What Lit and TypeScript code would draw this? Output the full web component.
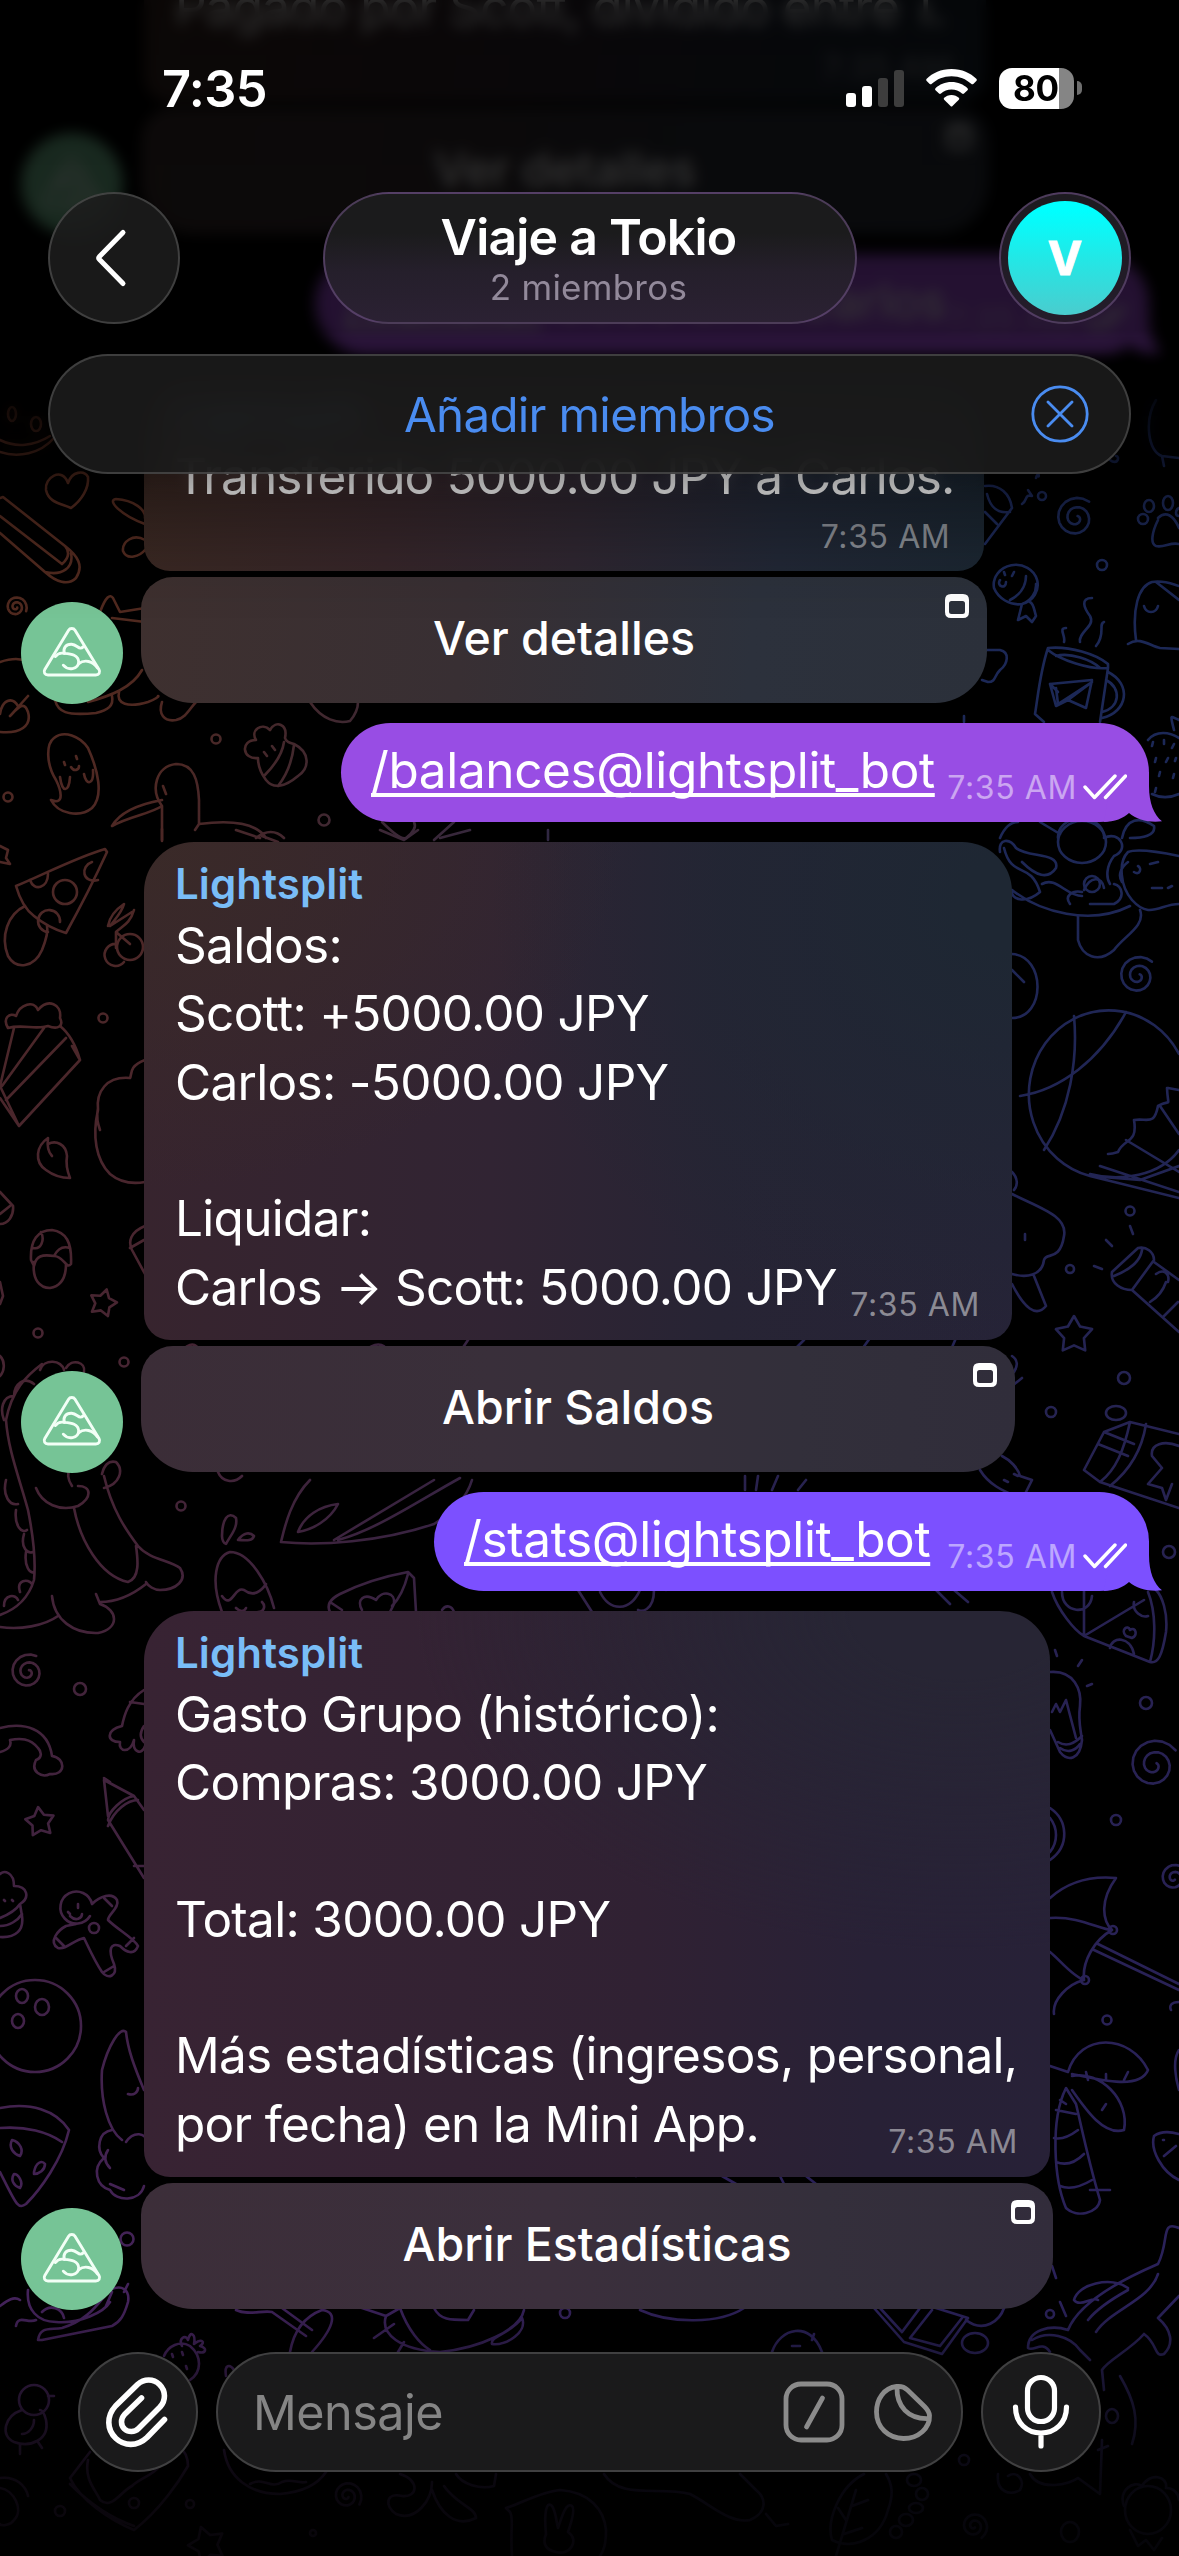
import { LitElement, html, svg, css } from "lit";
import { customElement, property } from "lit/decorators.js";

/* ---------- wallpaper doodles ---------- */

const spiral = (x: number, y: number, r: number, turn = 0) => {
  let d = "";
  for (let i = 0; i <= 40; i++) {
    const t = i / 40;
    const a = turn + t * Math.PI * 4;
    const k = r * (0.12 + 0.88 * t);
    d += `${i ? "L" : "M"}${(x + k * Math.cos(a)).toFixed(1)} ${(y + k * Math.sin(a)).toFixed(1)}`;
  }
  return d;
};

const ring = (x: number, y: number, rx: number, ry = rx) =>
  `M${x - rx} ${y}a${rx} ${ry} 0 1 0 ${2 * rx} 0a${rx} ${ry} 0 1 0 ${-2 * rx} 0`;

const star = (x: number, y: number, r: number, turn = -1.57) => {
  let d = "";
  for (let i = 0; i < 10; i++) {
    const a = turn + (i * Math.PI) / 5;
    const k = i % 2 ? r * 0.55 : r;
    d += `${i ? "L" : "M"}${(x + k * Math.cos(a)).toFixed(1)} ${(y + k * Math.sin(a)).toFixed(1)}`;
  }
  return d + "Z";
};

const DOODLES: string[] = [
  // left edge, top
  "M0 452C18 458 40 454 54 438M0 440C16 448 34 446 50 436",
  ring(12, 414, 4, 7), ring(36, 424, 5, 7),
  "M68 483C62 466 44 478 46 490C49 503 60 503 71 508C82 500 89 488 88 477C84 470 72 471 68 483Z",
  "M0 498L3 497L65 546C78 556 84 566 76 578C68 586 56 582 45 572L0 533M0 516L62 564M62 564C69 558 70 552 65 546M45 572C62 576 74 568 71 553",
  "M145 524C122 516 106 500 116 499C134 500 146 510 145 518M145 540C133 533 122 542 123 551C127 561 140 556 145 550",
  spiral(16, 607, 11, 0.4),
  "M100 612C106 596 110 594 113 598L120 612L145 608M112 618L145 622",
  "M0 662C18 656 30 660 36 670M0 732C20 734 32 726 28 712C24 700 18 708 10 716M10 716L28 696M0 714C2 700 12 696 18 706",
  "M55 700C58 712 66 716 96 713C108 710 114 706 112 696M88 702C110 696 132 688 142 670M119 692C116 704 128 708 148 702C154 700 160 696 158 696M162 702C158 714 164 722 176 720C186 718 190 708 196 702",
  "M310 702C322 720 338 724 350 721C356 714 358 708 358 702",
  "M51 800C66 806 60 788 56 780C46 764 46 744 54 738C64 730 80 736 88 748C98 770 104 796 92 808C80 818 58 814 51 800Z",
  "M64 762l1 3M76 756l1 3M71 767c3 5 8 3 8-1M60 777c2 16 9 16 10 0M84 774c2 12 10 11 9-4",
  ring(216, 739, 4.5), ring(8, 797, 4.5), ring(324, 820, 5.5),
  "M258 758C242 760 240 740 256 740C250 730 262 722 270 730C276 720 288 724 285 738C286 742 290 743 294 744C310 752 310 768 298 776C286 786 274 790 266 780C260 772 258 764 258 758ZM284 742C282 756 272 768 264 776M294 745C292 762 286 776 278 786M264 752l3 4M272 746l3 4",
  "M162 840L162 806C150 790 156 766 176 764C194 764 198 780 199 800L199 824C230 820 256 822 266 838M162 800C140 804 120 812 112 826C130 816 150 814 162 806M163 786l3 8M199 824l-4 6M236 830l24 8M262 836l16 6",
  "M382 822C392 832 402 840 406 838C414 832 416 826 414 822M434 840l20-18",
  // left edge, upper middle
  "M105 849C80 856 40 876 16 886C20 900 26 910 34 916C46 926 56 930 66 933C82 904 96 876 107 852Z",
  ring(65, 892, 12), "M30 880c4 12 18 8 18-6M98 880C82 884 80 866 92 862M48 932A11 11 0 1 1 60 922",
  "M25 906C8 914 0 936 8 956C16 970 34 968 42 950C46 940 48 930 47 926",
  "M0 846l8 4-2 8 4 6-10-2",
  ring(130, 947, 13), "M117 944A11 11 0 1 0 124 962M116 932L116 948M116 932C122 926 130 924 134 910M108 926C110 914 118 908 124 904C122 912 116 918 110 926M116 932L130 944M110 926l22-14",
  "M162 841l0-12M256 838c10-8 20-8 28 0M380 830l24 10 14-10M440 838l30-8M548 830v10",
  "M8 1028C2 1018 10 1012 16 1016C20 1004 34 1000 38 1010C48 998 62 1004 60 1018C64 1026 58 1030 48 1026C36 1030 22 1024 8 1028ZM14 1028L0 1086L19 1126L80 1060C76 1046 70 1034 60 1026M44 1028L2 1086M66 1038L6 1100M80 1060L72 1046M19 1126L0 1098",
  ring(103, 1018, 4.5),
  "M48 1138C36 1146 34 1162 46 1170C54 1176 62 1178 70 1178C66 1168 66 1162 67 1156C66 1144 56 1140 48 1144M48 1138c-1 8 0 14 4 18",
  "M145 1060C128 1066 132 1076 130 1078C106 1076 96 1092 98 1110C92 1136 96 1160 110 1174C122 1184 134 1184 145 1182M98 1108c-2 10 0 16 2 22",
  "M0 1192L13 1206C14 1216 8 1224 0 1224M0 1214l10-8",
  "M31 1260C30 1240 38 1230 52 1230C66 1232 72 1242 71 1264C66 1270 64 1256 54 1256C42 1254 36 1256 34 1266ZM34 1262C32 1280 40 1288 50 1288C62 1286 66 1276 66 1264M33 1248c8 2 12-8 8-16M54 1256c4-8 10-10 16-8",
  "M145 1226C130 1232 128 1242 132 1250L145 1274M130 1248l14-8",
  star(103, 1303, 14, -1.3), ring(38, 1333, 4.5), ring(124, 1362, 4.5), "M0 1282l3 14-3 8M0 1356c6 6 4 16 0 20",
  // dinosaur
  "M42 1364C26 1376 12 1390 6 1420C8 1450 20 1480 28 1510C34 1540 36 1560 34 1580C28 1600 14 1610 0 1615M34 1384C24 1376 14 1384 14 1396M14 1396C2 1396 0 1410 4 1420M6 1480C2 1496 10 1506 18 1504M16 1510C14 1526 22 1534 27 1530M24 1534C20 1548 28 1554 33 1552M26 1552C24 1566 30 1574 34 1572M20 1592C16 1580 28 1578 32 1584M4 1606C4 1594 16 1594 18 1600",
  "M36 1488C42 1504 60 1512 78 1506C92 1498 92 1486 78 1486M72 1486C68 1480 66 1474 72 1464M74 1508C80 1540 100 1576 128 1582C140 1578 138 1560 136 1546M104 1476C112 1510 126 1530 138 1546C150 1560 170 1560 180 1568C188 1580 176 1590 160 1590C154 1590 148 1586 146 1582M104 1488C120 1484 124 1470 116 1462C108 1460 104 1466 102 1474M52 1596C54 1620 74 1634 98 1633C120 1628 118 1610 100 1604L96 1594M100 1602C120 1602 136 1592 146 1584M0 1627C20 1630 44 1626 58 1616",
  "M40 1370c4-12 22-10 24 0M66 1368c6-10 20-6 18 4",
  ring(181, 1506, 4.5),
  "M218 1472c4 10 16 12 24 4M310 1480C290 1500 284 1530 281 1542C320 1546 380 1542 434 1524M434 1480L334 1540M298 1532C304 1516 320 1506 338 1504C330 1520 312 1530 298 1532ZM434 1524C450 1514 466 1500 472 1480M338 1540C376 1530 420 1500 460 1478",
  "M222 1536C222 1520 228 1510 236 1518C238 1528 230 1536 226 1544C224 1544 222 1540 222 1536ZM238 1540c6-8 12-8 16-4c-2 6-10 4-16 4Z",
  "M222 1612C210 1580 216 1556 230 1552C250 1552 268 1584 274 1608M222 1596C232 1610 234 1586 244 1590C254 1598 262 1590 266 1584M236 1608c4 4 8 4 10 0M258 1612c6 0 8-6 4-10",
  "M330 1612C326 1604 332 1598 340 1594C360 1584 386 1576 408 1572L414 1578L416 1612M330 1602L342 1610M362 1610C356 1600 364 1592 376 1600C382 1590 396 1592 394 1604L390 1612M408 1574C404 1590 398 1600 392 1606M442 1610c4-6 10-4 12 2",
  "M578 1590l14 22M600 1592c10 20 30 20 40-2M666 1590v-4M654 1590c0 22-14 22-16 20",
  // left edge, lower middle
  spiral(28, 1672, 18, -1.1), ring(80, 1689, 6),
  "M144 1690C128 1700 124 1716 122 1726C106 1730 106 1742 120 1742C118 1752 130 1754 134 1740C132 1752 142 1756 145 1746M130 1702l14 2M144 1726c-4 6-4 12 0 16",
  "M0 1728C24 1722 48 1728 52 1756C66 1758 66 1776 50 1774C42 1778 30 1772 36 1760C42 1758 42 1752 38 1748C30 1738 20 1738 10 1740C12 1746 8 1750 0 1752",
  star(40, 1822, 15, -1.7),
  "M144 1878L108 1820C108 1812 122 1798 134 1796L144 1810M108 1816L104 1780L134 1796M104 1778l6 4M108 1826c6-16 20-26 30-26M134 1866h10",
  "M0 1874C4 1870 14 1872 14 1886C28 1886 30 1898 20 1904L22 1916C24 1930 16 1938 0 1937M0 1918C10 1914 16 1910 20 1904M0 1926c10 0 18-6 22-12M4 1900l1 1M12 1900l1 1",
  "M90 1916A16 16 0 1 1 92 1904M92 1904C100 1896 112 1892 117 1900C120 1908 108 1914 108 1920C118 1930 134 1938 138 1946C134 1956 126 1952 120 1946C110 1942 108 1950 114 1964C118 1976 108 1980 102 1972C94 1960 88 1946 84 1938C74 1940 66 1950 58 1948C48 1942 58 1930 66 1926L76 1924M56 1938l8 8M104 1898l8 8M126 1946l8-8M104 1972l10-6M68 1912l2 2M78 1904v4M70 1916c6 6 12 2 12-2",
  ring(94, 1928, 5),
  ring(35, 2026, 46), ring(22, 1996, 6, 7), ring(42, 2007, 7, 8), ring(18, 2021, 6, 7),
  "M144 2090C134 2066 128 2050 126 2032C120 2026 108 2046 102 2070C100 2100 108 2130 122 2140M128 2094c6 2 10-2 10-6",
  // lower left corner
  "M0 2108C30 2102 56 2110 69 2130C62 2160 40 2190 26 2204C18 2210 16 2204 0 2172M0 2128C26 2126 48 2132 62 2142M12 2140c-4 8 2 14 8 16c4-6 0-14-8-16ZM34 2172c2-10 8-12 11-8c0 6-6 10-11 10ZM14 2174c-4 6 0 12 6 14c4-6-2-14-6-14Z",
  "M126 2142C134 2130 146 2134 146 2140M112 2130C98 2132 96 2150 104 2158C92 2168 96 2186 110 2190C116 2202 140 2202 144 2186M108 2150c-4 6-4 12 2 18M110 2184l14 6",
  ring(127, 2239, 6.5),
  "M28 2290C26 2310 38 2322 56 2322C80 2324 104 2312 110 2302M38 2340C40 2326 50 2330 62 2328C90 2320 100 2300 110 2290C122 2284 130 2290 128 2302C124 2316 120 2322 112 2326L42 2340ZM0 2306C8 2300 14 2296 20 2300M16 2326C18 2314 28 2324 36 2320M106 2306l6-14M124 2292l4-8M42 2312c8-8 20-4 22 6",
  "M164 2356C168 2346 180 2340 190 2346C202 2356 202 2372 190 2380M182 2346c-4-8 4-12 6-6c2-10 8-6 6 4c8-6 12-2 6 2c8 2 6 8-2 6M172 2354l1 3M182 2352l1 3M186 2366l1 3",
  "M236 2310C248 2316 262 2310 272 2312L306 2336M282 2308L312 2330M290 2352C294 2330 306 2316 322 2310C340 2312 332 2330 312 2352",
  "M362 2308L386 2316L400 2308M386 2316C380 2334 400 2350 440 2352C480 2348 520 2330 524 2310M400 2308C408 2330 420 2344 430 2350M434 2308C440 2320 450 2320 468 2320L474 2310M492 2344C490 2336 510 2334 522 2318C528 2332 506 2346 492 2344ZM374 2338l20-14M398 2352l6-10",
  ring(565, 2313, 5), "M226 2376c-2-12 4-12 8-6",
  // bottom strip
  ring(34, 2400, 15), "M22 2410C4 2416 0 2436 14 2442C30 2448 50 2440 46 2420C44 2412 42 2410 40 2410M20 2444v10M38 2442l4 6M34 2420c0 8-6 14-12 14M48 2396h6",
  "M0 2478C16 2476 26 2486 28 2496M0 2488C14 2490 24 2510 14 2520C10 2526 0 2526 0 2524M90 2452L70 2478C80 2500 110 2520 134 2530C160 2510 180 2480 188 2466C188 2456 184 2450 178 2446M88 2460C84 2480 96 2490 100 2500C112 2510 120 2492 132 2486C140 2478 152 2476 160 2466M70 2484c20 20 40 34 64 42",
  ring(60, 2511, 5), ring(134, 2503, 5), ring(190, 2504, 4), star(207, 2545, 19, -1.9), ring(313, 2533, 3),
  "M224 2450C228 2478 250 2494 280 2494C304 2492 318 2484 326 2472M250 2484c14-8 20 6 32-2c10-4 16 2 24 0",
  spiral(347, 2496, 15, 0.6),
  "M400 2474C420 2480 418 2498 402 2496C386 2492 384 2506 396 2514C416 2522 432 2500 432 2482M432 2490C440 2514 456 2528 476 2518C476 2508 456 2504 444 2486M456 2474C462 2484 480 2490 494 2486L496 2474",
  "M512 2556C510 2530 514 2518 510 2512L506 2508C520 2504 540 2492 560 2490C590 2492 604 2510 606 2530C606 2544 604 2550 600 2556M546 2534C544 2514 546 2500 552 2506C556 2512 556 2520 558 2528C562 2516 566 2502 572 2506C576 2510 570 2526 568 2532C580 2540 570 2556 556 2552C546 2550 542 2544 546 2534Z",
  "M604 2474C620 2500 660 2486 690 2494C710 2504 730 2524 750 2520C768 2512 766 2498 756 2490L740 2474M766 2514l10 12 12-2",
  "M864 2474C840 2486 826 2520 832 2540C852 2550 880 2540 888 2510C894 2494 892 2484 886 2474M836 2556L856 2490M846 2520l-8-12M852 2506l16-6M844 2534l18-6",
  ring(914, 2480, 7, 6), ring(922, 2494, 6), ring(916, 2508, 7, 5), ring(906, 2520, 7, 6), ring(896, 2532, 6),
  spiral(974, 2526, 14, 1), ring(1070, 2532, 9, 10), ring(964, 2460, 5),
  ring(1148, 2510, 23, 24), "M1124 2506C1118 2490 1134 2480 1142 2486C1150 2472 1168 2476 1166 2488C1174 2488 1179 2494 1179 2500M1130 2530l8 16 8-6 8 10 8-12",
  "M998 2474C996 2492 1010 2496 1020 2490C1026 2480 1016 2470 1008 2476M1030 2474C1040 2492 1070 2484 1078 2478L1100 2494L1102 2440",
  // right edge, top
  "M1156 400C1144 420 1148 452 1162 456L1179 458M1162 456l2 10M1110 460c8 6 10-4 6-4",
  "M985 486C1000 484 1010 494 1012 508L985 544M987 494C990 506 996 514 1010 512M985 512l12 12",
  "M1036 478C1038 470 1040 478 1038 476M1022 504c6-4 2-10 10-8l-4-6",
  ring(1042, 496, 4), ring(1102, 565, 5), spiral(1076, 518, 21, -0.9),
  "M1158 518C1166 510 1174 516 1179 528M1158 520C1152 532 1150 544 1156 546C1164 548 1170 542 1179 544", ring(1143, 519, 5), ring(1149, 506, 5, 6), ring(1168, 503, 5, 7), "M1179 508c-4 2-4 8 0 8",
  "M1022 604A22 20 0 1 0 994 588C998 598 1010 606 1022 604A22 20 0 0 0 1036 584M1026 576C1026 588 1018 596 1010 600M1022 604L1018 620L1026 616L1032 622L1036 616C1034 610 1034 604 1030 602M1000 580c-4 6 6 10 6 2M1004 572l1 3M1012 576l2-4",
  "M1179 586C1172 584 1164 580 1152 582C1138 586 1132 610 1136 640M1156 582L1179 600M1144 606c2 8 12 8 14 0M1128 644C1140 636 1150 646 1160 648L1179 649",
  "M1092 598C1080 598 1084 608 1090 616C1096 626 1078 632 1080 642M1066 628C1058 628 1066 636 1064 642M1104 622C1098 624 1106 634 1096 646",
  "M1048 648C1040 672 1038 696 1035 714L1044 722M1048 648C1070 646 1096 654 1108 664L1108 668C1090 670 1060 660 1048 650M1108 668L1100 722M1056 656C1070 652 1092 660 1100 668M1108 672C1132 684 1128 712 1102 718M1106 680C1122 688 1120 708 1102 712M1050 684L1092 680L1086 708L1068 700L1056 706ZM1056 688L1058 704L1092 682L1068 700M1050 684l8 8",
  "M987 650H1000C1010 652 1008 664 1000 670C994 676 996 682 988 682M982 680l6 2M964 716v6",
  "M1148 740C1156 730 1170 732 1179 738M1179 720C1170 716 1170 714 1174 730M1153 742l-1 4M1164 740v4M1174 744l-2 4M1156 758l-1 4M1168 758l-2 4M1160 772l-1 4M1174 774l-1 4M1156 788l-1 4M1152 794c8 4 18 4 27 0M1176 758l-1 3",
  // right edge, upper middle
  "M1000 838C1006 824 1014 822 1018 822M1040 822L1060 834M1122 838C1126 818 1140 816 1154 826C1156 836 1142 838 1130 838M1058 838a22 18 0 0 1 46-2",
  ring(1082, 842, 24, 21), "M1000 852C998 838 1010 838 1016 848C1028 858 1060 852 1056 868C1048 880 1036 876 1022 862M1012 890C1010 900 1026 904 1040 892C1030 860 1012 880 1004 848M1104 838C1120 830 1130 850 1114 856C1106 866 1106 878 1110 884M1042 884C1056 876 1066 896 1082 896M1070 904C1064 896 1072 890 1082 892M1012 890C1040 912 1090 926 1130 906M1090 904l24 0c12-6 8-18 0-20",
  ring(1092, 884, 8), "M1084 890c6-14 18-14 20-2",
  "M1132 900C1120 886 1118 862 1128 852C1138 848 1160 852 1179 856M1132 900C1150 920 1160 904 1179 904M1134 872c6 4 8-4 4-6M1150 864l8-2M1152 888l10 0M1168 888l4-2M1128 862c-8 6-10 14-6 20M1140 910C1146 926 1124 936 1114 950C1098 964 1082 956 1078 940L1078 916",
  "M1012 954C1046 956 1046 1018 1012 1018M1012 970l12 12",
  spiral(1138, 976, 20, -0.8),
  "M1179 1054A80 84 0 1 0 1090 1176L1140 1180L1179 1166M1074 1016C1078 1060 1070 1110 1044 1150M1126 1012C1100 1060 1060 1090 1020 1096M1090 1176L1179 1198M1090 1174C1120 1182 1160 1176 1179 1150M1167 1088C1168 1110 1172 1098 1158 1106C1154 1126 1148 1118 1134 1120C1138 1144 1124 1138 1118 1152C1112 1154 1108 1154 1108 1154M1160 1106L1179 1134M1126 1140L1179 1172M1100 1166l79 26M1168 1088l11 2",
  "M1012 1172c6 6 6 14 2 18M1012 1194C1040 1208 1068 1216 1064 1236C1060 1262 1046 1252 1044 1260C1042 1276 1026 1278 1012 1274M1012 1284C1024 1308 1036 1318 1046 1306L1034 1276M1025 1234v6",
  ring(1130, 1211, 4.5), ring(1070, 1269, 4), "M1130 1226l3 8M1106 1240l6 6M1094 1266l8 3",
  "M1138 1248L1112 1272C1110 1284 1122 1290 1132 1290L1154 1260C1154 1252 1146 1246 1138 1248ZM1114 1276C1124 1272 1140 1264 1142 1250M1154 1262L1179 1280M1132 1290L1179 1332M1156 1274c8-6 14 0 12 8M1150 1302c10-6 14-14 16-20M1164 1316l14-14",
  star(1074, 1335, 19), ring(1124, 1378, 6), ring(1051, 1412, 5), "M1012 1356C1018 1360 1018 1366 1014 1372M1012 1386l10-8",
  ring(1116, 1413, 10, 7),
  "M1084 1470L1104 1432L1130 1422L1179 1434M1084 1470L1100 1482L1179 1508M1104 1432L1134 1444M1130 1422C1124 1450 1116 1470 1100 1482M1146 1424C1142 1450 1130 1470 1110 1486M1098 1444l30 12M1179 1446C1164 1440 1150 1444 1152 1456L1162 1468L1148 1484L1162 1488L1166 1500L1172 1484",
  "M980 1470C992 1490 1014 1494 1028 1502M1002 1456C1010 1460 1018 1468 1020 1476L1032 1480L1026 1492M1004 1480l4 2M1014 1474l4 2M745 1490v-14M756 1490l2-14M772 1490l6-14M798 1490l8-10",
  "M364 1352c10-10 20-10 24 0M460 1352l8-12M790 1354l14-14M860 1352l10-14M950 1352l6-14M180 1352c10-10 16-10 20 0",
  // right edge, lower middle
  ring(1169, 1552, 6),
  "M1052 1592C1058 1610 1074 1630 1084 1636L1150 1662C1158 1664 1162 1656 1166 1632C1168 1612 1162 1596 1156 1590M1084 1636L1084 1590M1084 1636L1144 1600M1150 1662C1156 1640 1156 1612 1148 1592M1110 1648c2-12 20-12 24 6M1134 1602c-2 10 8 16 14 14M1126 1636c-6-6 2-12 4-6c6-4 8 6 2 8ZM1062 1592c0 22 28 24 30 4M936 1590l14 14M954 1590l14 12",
  "M1055 1650l2 6M1082 1660l-4 6M1092 1684l-5 2",
  "M1050 1672C1074 1670 1082 1690 1080 1706C1078 1720 1080 1726 1082 1740C1080 1760 1068 1762 1060 1752L1050 1730M1058 1742c10 6 18 0 24-6M1060 1748c8 6 16 2 20-4M1052 1712l4-8 4 8 6-12 10 38",
  ring(1146, 1703, 6), spiral(1154, 1765, 26, -0.6), ring(1116, 1820, 5), "M1050 1808C1068 1820 1070 1846 1050 1860M1050 1818c8 10 8 24 0 34",
  spiral(1174, 1878, 16, 1.1),
  "M1050 1898C1070 1880 1094 1876 1116 1878C1100 1900 1102 1920 1112 1930C1100 1930 1080 1916 1050 1918M1112 1930C1094 1940 1082 1962 1084 1980C1072 1976 1060 1960 1050 1952M1084 1980C1068 1984 1052 2000 1054 2014M1094 1950L1179 1990M1098 1944L1179 1984M1179 2002c-8 0-10 4-8 8",
  ring(1113, 1930, 4), ring(1085, 1980, 4), ring(1107, 2020, 4.5),
  "M1050 2066L1068 2072C1080 2032 1130 2034 1148 2070C1140 2090 1100 2080 1072 2074M1072 2076C1100 2070 1130 2100 1124 2130C1104 2136 1086 2110 1072 2090M1066 2088C1050 2120 1054 2180 1066 2208C1076 2218 1098 2214 1100 2200C1088 2160 1080 2120 1076 2104ZM1056 2110l20 4M1054 2138c8 2 16-2 24-8M1056 2162c10 4 20 0 28-8M1060 2186c10 4 22 0 32-6M1090 2190h20M1086 2072l2 8M1106 2080l0-6M1124 2080l4-8M1102 2110l4-6M1060 2100l6 4",
  "M1179 2050C1172 2060 1176 2080 1179 2090M1179 2180C1162 2172 1150 2150 1154 2136C1162 2130 1172 2132 1179 2134M1164 2156l12-10M1163 2140l1 0",
  // crocodile
  "M1179 2228C1160 2220 1170 2240 1158 2264C1130 2276 1080 2300 1068 2330M1128 2288C1110 2276 1078 2284 1074 2300C1080 2308 1092 2296 1098 2300M1158 2274C1150 2300 1110 2310 1096 2332M1128 2290C1110 2300 1096 2310 1088 2320M1158 2318C1172 2330 1174 2344 1164 2354C1154 2358 1158 2344 1144 2334M1144 2334C1130 2350 1108 2360 1102 2370L1104 2390M1158 2318L1179 2296M1068 2330C1050 2324 1028 2330 1028 2348C1034 2352 1042 2340 1050 2352M1032 2340C1048 2330 1070 2336 1080 2350C1086 2356 1090 2360 1090 2360M1056 2278l-4-12M1066 2316l-6-14",
  ring(1050, 2314, 4), ring(975, 2343, 13, 10),
  "M874 2308L904 2342L942 2354L968 2318L936 2308M880 2308L902 2332L920 2308M932 2310L910 2338L940 2346L962 2318M966 2320C984 2334 1000 2320 1004 2308M640 2310C670 2324 720 2324 744 2308M772 2352C780 2328 810 2320 822 2352M792 2346h8M812 2340l2-6M636 2176c6-6 14-8 20-6M722 2176l14 8M780 2176l4 8M806 2176l10 8",
  "M1120 2376C1134 2400 1140 2420 1132 2444M1108 2446l-10 4", ring(1112, 2416, 6, 7),
];

@customElement("chat-wallpaper")
class ChatWallpaper extends LitElement {
  static styles = css`
    :host { display: block; }
    svg { display: block; width: 1179px; height: 2556px; }
  `;
  render() {
    return html`<svg viewBox="0 0 1179 2556" aria-hidden="true">
      <defs>
        <linearGradient id="left" x1="0" y1="0" x2="0" y2="1">
          <stop offset="0" stop-color="#50291c" /><stop offset=".25" stop-color="#50291f" />
          <stop offset=".5" stop-color="#482530" /><stop offset=".72" stop-color="#41233f" />
          <stop offset=".9" stop-color="#43225a" /><stop offset="1" stop-color="#3a2446" />
        </linearGradient>
        <linearGradient id="right" x1="0" y1="0" x2="0" y2="1">
          <stop offset="0" stop-color="#1a264f" /><stop offset=".3" stop-color="#1c2857" />
          <stop offset=".6" stop-color="#272251" /><stop offset=".9" stop-color="#2a215a" />
          <stop offset="1" stop-color="#24203f" />
        </linearGradient>
        <linearGradient id="across"><stop offset=".12" stop-color="#000" /><stop offset=".7" stop-color="#fff" /></linearGradient>
        <linearGradient id="fade" x1="0" y1="0" x2="0" y2="1">
          <stop offset=".9" stop-color="#000" stop-opacity="0" /><stop offset=".945" stop-color="#000" stop-opacity=".55" />
          <stop offset=".97" stop-color="#000" stop-opacity=".8" /><stop offset="1" stop-color="#000" stop-opacity=".86" />
        </linearGradient>
        <mask id="horizontal"><rect width="1179" height="2556" fill="url(#across)" /></mask>
        <mask id="lines" maskUnits="userSpaceOnUse" x="0" y="0" width="1179" height="2556">
          <g fill="none" stroke="#fff" stroke-width="2.6" stroke-linecap="round" stroke-linejoin="round">
            ${DOODLES.map((d) => svg`<path d=${d} />`)}
          </g>
        </mask>
      </defs>
      <rect width="1179" height="2556" fill="#000" />
      <g mask="url(#lines)">
        <rect width="1179" height="2556" fill="url(#left)" />
        <rect width="1179" height="2556" fill="url(#right)" mask="url(#horizontal)" />
      </g>
      <rect width="1179" height="2556" fill="url(#fade)" />
    </svg>`;
  }
}

/* ---------- messages ---------- */

interface BotMessage {
  lines: string[];
  action: string;
  width: number;
  tone: string;
  tight?: boolean;
}

@customElement("bot-message")
class BotMessageView extends LitElement {
  @property({ attribute: false }) message!: BotMessage;

  static styles = css`
    :host { display: flex; align-items: flex-end; gap: 18px; padding-left: 21px; }
    .avatar { flex: none; width: 102px; height: 102px; margin-bottom: -1px; }
    .stack { display: flex; flex-direction: column; align-items: center; gap: 6px; }
    .bubble {
      box-sizing: border-box; display: grid; padding: 15px 30px 19px 31px;
      border-radius: 50px 50px 26px 26px; color: #fff;
    }
    .name { grid-area: 1 / 1; font-size: 42px; line-height: 53px; font-weight: 600; letter-spacing: 0.1px; color: #79bdf7; }
    .body { grid-area: 2 / 1; padding-top: 1px; font-size: 49.5px; line-height: 68.3px; letter-spacing: -0.7px; white-space: pre; }
    .bubble.warm .body { letter-spacing: -0.88px; }
    .line { display: block; height: 68.3px; }
    .time { grid-area: 2 / 1; align-self: end; justify-self: end; font-size: 32px; line-height: 40px; letter-spacing: 0.6px; color: rgba(255, 255, 255, 0.48); margin: 0 2px -4.4px 0; }
    .below { grid-area: 3 / 1; margin-top: 6px; margin-right: 4px; }
    .action {
      box-sizing: border-box; display: grid; grid-template-columns: 1fr auto 1fr; align-items: center;
      height: 126px; padding: 0 18px 4px; border-radius: 32px 32px 52px 52px;
      color: #fff; font-size: 46.5px; font-weight: 500; letter-spacing: -0.05px;
    }
    .label { grid-column: 2; }
    .open { grid-column: 3; justify-self: end; align-self: start; margin-top: 17px; width: 24px; height: 24px; }
    .bubble.warm { background: linear-gradient(180deg, rgba(0,0,0,.25), transparent 60%), linear-gradient(95deg, #3a2822 0%, #352529 30%, #2e2630 52%, #212735 76%, #1b2631 100%); }
    .bubble.mixed { background: radial-gradient(ellipse 60% 90% at 100% 12%, #1e2733 10%, transparent 100%), radial-gradient(ellipse 55% 70% at 0% 0%, #3a2a28 0%, transparent 100%), linear-gradient(90deg, #37242e 0%, #312433 40%, #272434 66%, #262337 100%); }
    .bubble.plum { background: radial-gradient(ellipse 60% 60% at 90% 0%, #272534 20%, transparent 100%), linear-gradient(90deg, #382333 0%, #332233 35%, #302133 55%, #282136 80%, #272137 100%); }
    .action.warm { background: linear-gradient(95deg, #3e302f, #382f33 38%, #2c313c 72%, #2b303a); }
    .action.mixed { background: linear-gradient(90deg, #3b2d37, #392f3a 40%, #322f3a 75%, #302d3a); }
    .action.plum { background: linear-gradient(90deg, #3c2e39, #3b2f3c 45%, #342f3b 75%, #322c3b); }
  `;

  render() {
    const { lines, action, width, tone, tight } = this.message;
    return html`
      <svg class="avatar" viewBox="0 0 102 102" aria-hidden="true">
        <circle cx="51" cy="51" r="51" fill="#76c496" />
        <g fill="none" stroke="#f2fff6" stroke-width="2.9" stroke-linecap="round" stroke-linejoin="round">
          <path d="M47.6 28.2C49 25.9 52.6 25.9 54 28.2L78 67.5C79.6 70.3 78 73 74.8 73H27C23.8 73 22.200 70.3 23.800 67.5Z" />
          <path d="M62.500 44.600C58 49 57 42.800 50.500 42.200C44.500 42 42 46.500 43.300 51.400C50.500 52 57.500 53 57.700 60C57.200 67.500 47 69 42.300 63.200" />
          <path d="M34.300 54.500C37 51 40.500 50.800 43.300 51.400M57.500 61.800C63.500 57 72 59 76.500 66" />
        </g>
      </svg>
      <div class="stack">
        <div class="bubble ${tone}" style="width:${width}px">
          <div class="name">Lightsplit</div>
          <div class="body">${lines.map((l) => html`<span class="line">${l}</span>`)}</div>
          <span class="time ${tight ? "below" : ""}">7:35 AM</span>
        </div>
        <div class="action ${tone}" style="width:${width + 6}px">
          <span class="label">${action}</span>
          <svg class="open" viewBox="0 0 24 24" aria-hidden="true">
            <path fill="#fff" fill-rule="evenodd" d="M6 0H18Q24 0 24 6V18Q24 24 18 24H6Q0 24 0 18V6Q0 0 6 0ZM6.500 7Q4 7 4 9.500V17.500Q4 20 6.500 20H17.500Q20 20 20 17.500V9.500Q20 7 17.500 7Z" />
          </svg>
        </div>
      </div>`;
  }
}

@customElement("command-message")
class CommandMessage extends LitElement {
  @property() command = "";
  @property() args = "";
  @property({ type: Number }) width = 808;
  @property() color = "#984de4";

  static styles = css`
    :host { display: flex; justify-content: flex-end; padding-right: 30px; }
    .bubble { position: relative; box-sizing: border-box; height: 99px; display: flex; align-items: baseline; justify-content: space-between; padding: 13px 22px 0 30px; border-radius: 49.5px; color: #fff; white-space: nowrap; }
    .text { font-size: 49.5px; line-height: 68px; letter-spacing: -0.38px; }
    .command { text-decoration: underline; text-decoration-thickness: 3.6px; text-underline-offset: 5px; text-decoration-skip-ink: none; }
    .meta { flex: none; display: flex; align-items: flex-end; gap: 6px; position: relative; top: 11px; font-size: 32px; line-height: 40px; letter-spacing: 0.6px; color: rgba(255, 255, 255, 0.5); }
    .checks { flex: none; width: 44px; height: 26px; margin-bottom: 8px; }
    .tail { position: absolute; right: -13px; bottom: 0; width: 60px; height: 50px; }
  `;

  render() {
    return html`<div class="bubble" style="width:${this.width}px;background:${this.color}">
      <span class="text"><span class="command">${this.command}</span>${this.args ? ` ${this.args}` : ""}</span>
      <svg class="tail" viewBox="0 0 60 50" aria-hidden="true">
        <path fill=${this.color} d="M10 0H47V14C47 31 52 43 60 49.300C48 51 35 48 27 41C22 46 12 50 2 50Z" />
      </svg>
      <span class="meta">7:35 AM
        <svg class="checks" viewBox="0 0 44 26" fill="none" stroke="#fff" stroke-width="3.400" stroke-linecap="round" stroke-linejoin="round">
          <path d="M2 13L11.500 23.500L32 2M22.500 23.500L42.500 2" />
        </svg>
      </span>
    </div>`;
  }
}

/* ---------- chrome ---------- */

const GLYPHS = {
  back: svg`<svg class="back" viewBox="0 0 34 60" fill="none" stroke="#fff" stroke-width="5" stroke-linecap="round" stroke-linejoin="round"><path d="M29 4.500L5.500 28.500Q4 30 5.500 31.500L29 55.500" /></svg>`,
  close: svg`<svg class="close" viewBox="0 0 60 60" fill="none" stroke="#4a8cf0" stroke-width="2.800" stroke-linecap="round"><circle cx="30" cy="30" r="27.200" /><path d="M18 18L42 42M42 18L18 42" /></svg>`,
  clip: svg`<svg class="clip" viewBox="78 2352 120 120" fill="none" stroke="#fff" stroke-width="5.600" stroke-linecap="round" stroke-linejoin="round"><path d="M164.500 2419.500L147 2437.500C137 2447 124 2446 116 2438.500C106.500 2429.500 106.500 2416 115.500 2406L137.500 2384.500C144 2378.500 153.500 2378.500 159.500 2384.500C166 2391 166 2400.500 160 2407L138.500 2428.500C134.500 2432.500 128.500 2432.500 124.500 2429C120.500 2425 120.500 2419 124.500 2414.500L141.500 2398" /></svg>`,
  slash: svg`<svg class="tool" viewBox="0 0 62 62" fill="none" stroke="#8b8b8b" stroke-width="4.800" stroke-linecap="round"><rect x="3" y="3" width="56" height="56" rx="15" /><path d="M23.500 46L39.500 17" /></svg>`,
  sticker: svg`<svg class="tool" viewBox="0 0 62 62" fill="none" stroke="#8b8b8b" stroke-width="4.800" stroke-linecap="round" stroke-linejoin="round"><path d="M24.500 5.500C12 7 4.500 18 4.500 31C4.500 46.500 16.500 57.500 31.500 57.500C46.500 57.500 58 47 57.500 34.500C57.200 30.500 55 28 52.500 25.500L35.500 9C32.500 6 29 5 24.500 5.500ZM25 6.500C24.500 25 36 38.500 57 37.500" /></svg>`,
  mic: svg`<svg class="mic" viewBox="0 0 60 80" fill="none" stroke="#fff" stroke-width="5.200" stroke-linecap="round"><rect x="16.500" y="5.500" width="27" height="44" rx="13.500" /><path d="M4.500 35C4.500 51 16 61 30 61S55.500 51 55.500 35M30 61V74" /></svg>`,
};

const BOT: Record<string, BotMessage> = {
  paid: { lines: ["Pagado por Scott, dividido entre 1."], action: "Ver detalles", width: 842, tone: "warm", tight: true },
  transfer: { lines: ["Transferido 5000.00 JPY a Carlos."], action: "Ver detalles", width: 840, tone: "warm", tight: true },
  balances: { lines: ["Saldos:", "Scott: +5000.00 JPY", "Carlos: -5000.00 JPY", "", "Liquidar:", "Carlos → Scott: 5000.00 JPY"], action: "Abrir Saldos", width: 868, tone: "mixed" },
  stats: { lines: ["Gasto Grupo (histórico):", "Compras: 3000.00 JPY", "", "Total: 3000.00 JPY", "", "Más estadísticas (ingresos, personal,", "por fecha) en la Mini App."], action: "Abrir Estadísticas", width: 906, tone: "plum" },
};

@customElement("app-root")
class AppRoot extends LitElement {
  static styles = css`
    :host { display: block; font-family: Inter, "Liberation Sans", sans-serif; }
    .screen { position: relative; width: 1179px; height: 2556px; overflow: hidden; background: #000; }
    .wallpaper, .thread, .veil, .top, .composer { position: absolute; left: 0; right: 0; }
    .wallpaper { top: 0; }
    .thread { bottom: 247px; display: flex; flex-direction: column; gap: 20px; }
    .veil { top: 0; }
    .soft { height: 500px; backdrop-filter: blur(7px); -webkit-mask-image: linear-gradient(#000 350px, rgba(0,0,0,.35) 440px, transparent 500px); mask-image: linear-gradient(#000 350px, rgba(0,0,0,.35) 440px, transparent 500px); }
    .dark { height: 640px; background: linear-gradient(rgba(0,0,0,.8) 0, rgba(0,0,0,.79) 330px, rgba(0,0,0,.52) 410px, rgba(0,0,0,.28) 490px, rgba(0,0,0,.06) 560px, transparent 620px); }

    .top { top: 0; display: flex; flex-direction: column; }
    .status { display: flex; align-items: center; height: 56px; padding: 60px 97px 0 162px; }
    .clock { flex: 1; color: #fff; font-size: 50.5px; font-weight: 600; letter-spacing: -0.6px; }
    .bars { display: flex; align-items: flex-end; gap: 6px; height: 37px; margin-right: 22px; }
    .bar { width: 10px; border-radius: 3px; background: #fff; }
    .bar.off { background: #3d3d3d; }
    .b1 { height: 14px; } .b2 { height: 21px; } .b3 { height: 29px; } .b4 { height: 37px; }
    .wifi { width: 51px; height: 38px; margin-right: 22px; }
    .battery { display: flex; align-items: center; justify-content: center; box-sizing: border-box; width: 75px; height: 41px; padding-right: 1px; border-radius: 13px; background: linear-gradient(90deg, #fff 60px, #858585 60px); color: #000; font-size: 35px; font-weight: 700; letter-spacing: -0.3px; }
    .nub { width: 5px; height: 14px; margin-left: 3px; border-radius: 0 5px 5px 0; background: #6e6e6e; }

    .glass { box-sizing: border-box; border: 2px solid rgba(255,255,255,.17); background: rgba(29,29,29,.88); backdrop-filter: blur(14px); }
    .nav { display: flex; align-items: center; justify-content: space-between; padding: 76px 48px 0 48px; }
    .round { display: flex; align-items: center; justify-content: center; width: 132px; height: 132px; border-radius: 50%; }
    .back { width: 34px; height: 60px; margin-right: 7px; }
    .title { display: flex; flex-direction: column; align-items: center; width: 534px; height: 132px; padding: 13px 2px 0 0; border-radius: 66px; border-color: rgba(150,110,180,.4); background: linear-gradient(#1b1b1c 30%, #251f2b 60%, #2b2133); }
    .group { color: #fff; font-size: 50px; line-height: 60px; font-weight: 600; letter-spacing: -0.8px; }
    .count { color: #92899a; font-size: 35px; line-height: 40px; letter-spacing: 0.25px; }
    .owner { border-color: rgba(150,110,180,.4); background: linear-gradient(#1d1b20, #241c2b); }
    .face { display: flex; align-items: center; justify-content: center; width: 114px; height: 114px; border-radius: 50%; background: linear-gradient(#00ffff 8%, #22e8e6 50%, #4accce); color: #fff; font-size: 46px; font-weight: 700; -webkit-text-stroke: 1px #fff; }
    .invite { display: grid; grid-template-columns: 1fr auto 1fr; align-items: center; height: 120px; margin: 30px 48px 0 48px; padding: 0 39px; border-radius: 60px; background: rgba(27,27,27,.9); }
    .add { grid-column: 2; color: #4a8cf0; font-size: 47.500px; letter-spacing: -0.7px; }
    .close { grid-column: 3; justify-self: end; width: 60px; height: 60px; }

    .composer { bottom: 84px; display: flex; gap: 18px; padding-left: 78px; }
    .key { width: 120px; height: 120px; flex: none; border-radius: 50%; display: flex; align-items: center; justify-content: center; background: #1a1a1b; }
    .field { display: flex; align-items: center; gap: 27px; width: 747px; height: 120px; padding: 0 27px 0 35px; border-radius: 60px; background: #1a1a1b; }
    .hint { flex: 1; color: #858585; font-size: 48.5px; letter-spacing: -0.5px; }
    .clip { width: 120px; height: 120px; flex: none; }
    .tool { width: 62px; height: 62px; }
    .mic { width: 60px; height: 80px; }
  `;

  render() {
    return html`<main class="screen">
      <chat-wallpaper class="wallpaper"></chat-wallpaper>
      <section class="thread">
        <bot-message .message=${BOT.paid}></bot-message>
        <command-message command="/transfer" args="5000 JPY Carlos" width="834" color="#a850e6"></command-message>
        <bot-message .message=${BOT.transfer}></bot-message>
        <command-message command="/balances@lightsplit_bot" width="808" color="#984de4"></command-message>
        <bot-message .message=${BOT.balances}></bot-message>
        <command-message command="/stats@lightsplit_bot" width="715" color="#7c50ff"></command-message>
        <bot-message .message=${BOT.stats}></bot-message>
      </section>
      <div class="veil soft"></div>
      <div class="veil dark"></div>
      <header class="top">
        <div class="status">
          <span class="clock">7:35</span>
          <div class="bars"><i class="bar b1"></i><i class="bar b2"></i><i class="bar off b3"></i><i class="bar off b4"></i></div>
          <svg class="wifi" viewBox="0 0 51 38" fill="#fff" aria-hidden="true">
            <path d="M25.500 0C36 0 44.500 4 50.300 9.800Q51.300 11 50.300 12L47.300 14.900Q46.300 15.800 45.200 14.800C40 10 33.500 7.200 25.500 7.200S11 10 5.800 14.800Q4.700 15.800 3.700 14.900L.7 12Q-.3 11 .7 9.800C6.500 4 15 0 25.500 0Z" />
            <path d="M25.500 13C32 13 37.500 15.500 41.500 19.200Q42.500 20.300 41.500 21.300L38 24.600Q37 25.400 36 24.500C33 22 29.700 20.500 25.500 20.500S18 22 15 24.500Q14 25.400 13 24.600L9.500 21.300Q8.500 20.300 9.500 19.200C13.500 15.500 19 13 25.500 13Z" />
            <path d="M25.500 26C28.500 26 31 27.200 32.800 28.700Q33.800 29.700 32.800 30.700L26.500 37Q25.500 38 24.500 37L18.200 30.700Q17.200 29.700 18.200 28.700C20 27.200 22.500 26 25.500 26Z" />
          </svg>
          <div class="battery">80</div><i class="nub"></i>
        </div>
        <div class="nav">
          <div class="glass round">${GLYPHS.back}</div>
          <div class="glass title"><span class="group">Viaje a Tokio</span><span class="count">2 miembros</span></div>
          <div class="glass round owner"><div class="face">V</div></div>
        </div>
        <div class="glass invite"><span class="add">Añadir miembros</span>${GLYPHS.close}</div>
      </header>
      <footer class="composer">
        <div class="glass key">${GLYPHS.clip}</div>
        <div class="glass field"><span class="hint">Mensaje</span>${GLYPHS.slash}${GLYPHS.sticker}</div>
        <div class="glass key">${GLYPHS.mic}</div>
      </footer>
    </main>`;
  }
}
